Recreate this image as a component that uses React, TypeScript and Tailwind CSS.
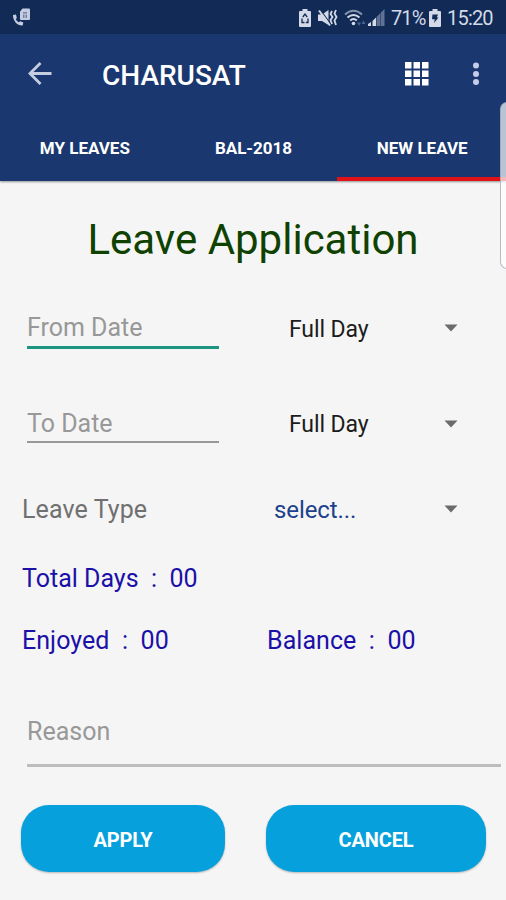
import React, { useState } from "react";

const tabs = ["MY LEAVES", "BAL-2018", "NEW LEAVE"];

const Caret = () => (
  <svg width="14" height="8" viewBox="0 0 14 8" className="absolute right-[48px]">
    <path d="M0.5 0.5h13L7 7.5z" fill="#6b6b6b" />
  </svg>
);

const BatteryIcon = ({ charging }: { charging?: boolean }) => (
  <svg width="12" height="18" viewBox="0 0 12 18">
    <path d="M3.5 0h5v2H11a1 1 0 0 1 1 1v14a1 1 0 0 1-1 1H1a1 1 0 0 1-1-1V3a1 1 0 0 1 1-1h2.500z" fill="#d3d9e6" />
    {charging ? (
      <path d="M3.500 5.500h5.500L7.800 8.500H9.500L5 14l.8-3.800H3z" fill="#122b56" />
    ) : (
      <g fill="none" stroke="#122b56" strokeWidth="1.300">
        <path d="M3.800 8 6 5l2.200 3" />
        <path d="M3 9.500v4h2.500M9 9.500v4H6.800" />
      </g>
    )}
  </svg>
);

const StatusBar = () => (
  <div className="flex h-[34px] items-center justify-between bg-[#122b56] pl-[12px] pr-[13px] text-[#d3d9e6]">
    <svg width="19" height="19" viewBox="0 0 19 19">
      <path d="M1 7l3-.5.8 3.500-1 1.200c.8 1.500 1.700 2.300 3 3l1.500-1 3 1.300-.6 3C5.500 18 .8 13 1 7z" fill="#c3cce0" />
      <path d="M10.500 .5H17q1 0 1 1v9.500q0 1-1 1H9q-1 0-1-1V3.500z" fill="#c3cce0" />
      <path d="M11 4h4v1.500h-4zM11 6.500h1.500V10H11zM13.500 6.500H15V10h-1.500z" fill="#7483a3" />
    </svg>
    <div className="flex items-center">
      <div className="mt-[2px] flex items-center">
        <span className="-ml-[3px] flex">
          <BatteryIcon />
        </span>
        <svg width="20" height="18" viewBox="0 0 20 18" className="ml-[7px]">
          <path d="M0 5.500h4L10.500 1v15L4 12H0z" fill="#d3d9e6" />
          <path d="M2.500 1 13.500 16" stroke="#122b56" strokeWidth="1.200" />
          <path d="M1 1.500 12 16.500" stroke="#d3d9e6" strokeWidth="2" />
          <path d="m14 2-1.500 3 2 3-2 3 1.500 4M18 1l-1.500 3.500 2 3.500-2 3.500 1.500 4.500" fill="none" stroke="#d3d9e6" strokeWidth="1.800" />
        </svg>
        <svg width="23" height="18" viewBox="0 0 23 18" className="ml-[6px]">
          <g fill="none" strokeWidth="2">
            <path d="M1 5.500Q9.500-2 18 5.500" stroke="#8592ad" />
            <path d="M3.500 8.500q6-5 12 0" stroke="#d3d9e6" />
            <path d="M6.200 11.500q3.300-3 6.600 0" stroke="#d3d9e6" />
          </g>
          <circle cx="9.500" cy="14.500" r="1.800" fill="#d3d9e6" />
          <path d="M13 13.500h4L15 17zM17.500 15h4l-2-3.500z" fill="#44648f" />
        </svg>
        <svg width="17" height="18" viewBox="0 0 17 18" className="ml-[1px]">
          <path d="M0 17v-2l3-2v4z" fill="#d3d9e6" />
          <path d="M4.500 17v-5L8 8.500V17z" fill="#d3d9e6" />
          <path d="M8.500 17V8L12 4.500V17zM12.500 17V4L16.500 0v17z" fill="#5f7295" />
        </svg>
      </div>
      <span className="ml-[6px] mt-[2px] w-[34px] whitespace-nowrap text-[20px] tracking-[-0.9px]">71%</span>
      <span className="ml-[4px] mr-px mt-[2px] flex">
        <BatteryIcon charging />
      </span>
      <span className="ml-[5px] mt-[2px] w-[46px] whitespace-nowrap text-[20px] tracking-[-0.8px]">15:20</span>
    </div>
  </div>
);

const App: React.FC = () => {
  const [active, setActive] = useState(2);

  return (
    <div className="relative h-[900px] w-[506px] overflow-hidden bg-[#f5f5f5] font-['Roboto',sans-serif]">
      <StatusBar />
      <header className="bg-[#1a386f] text-white shadow-[0_1px_2px_rgba(0,0,0,0.4)]">
        <div className="flex h-[80px] items-center pl-[28px] pr-[26px]">
          <svg width="24" height="24" viewBox="0 0 24 24" fill="none" stroke="#c5cde0" strokeWidth="2.800">
            <path d="M23.500 11.500H2M12.500 1 2 11.500 12.500 22" />
          </svg>
          <h1 className="ml-[50px] mt-[4px] text-[28px] font-medium leading-none">CHARUSAT</h1>
          <svg width="24" height="24" viewBox="0 0 24 24" className="ml-auto" fill="#fff">
            {[0, 8.500, 17].map((y) =>
              [0, 8.500, 17].map((x) => <rect key={`${x}-${y}`} x={x} y={y} width="6.500" height="6.500" />)
            )}
          </svg>
          <svg width="8" height="24" viewBox="0 0 8 24" className="ml-[43px]" fill="#c5cde8">
            <circle cx="4" cy="3.500" r="3" />
            <circle cx="4" cy="12" r="3" />
            <circle cx="4" cy="20" r="3" />
          </svg>
        </div>
        <nav className="grid h-[67px] grid-cols-3">
          {tabs.map((tab, index) => (
            <button
              key={tab}
              onClick={() => setActive(index)}
              className={`border-b-4 pl-px pt-[6px] text-[17px] font-bold ${index === active ? "border-[#e01218]" : "border-transparent"}`}
            >
              {tab}
            </button>
          ))}
        </nav>
      </header>

      <h2 className="h-[128px] text-center text-[42px] leading-[117px] text-[#0f4200]">
        Leave Application
      </h2>

      <div className="flex h-[40px] pl-[27px]">
        <div className="w-[192px] border-b-[3px] border-[#1c9480] text-[25px] leading-[38px] text-[#989898]">
          From Date
        </div>
        <div className="relative ml-[70px] flex h-[38px] flex-1 items-center text-[23px] tracking-[-0.1px] text-[#1c1c1c]">
          <span className="mt-[4px]">Full Day</span>
          <Caret />
        </div>
      </div>

      <div className="mt-[56px] flex h-[38px] pl-[27px]">
        <div className="w-[192px] border-b-2 border-[#989898] text-[25px] leading-[38px] text-[#989898]">
          To Date
        </div>
        <div className="relative ml-[70px] flex h-[38px] flex-1 items-center text-[23px] tracking-[-0.1px] text-[#1c1c1c]">
          <span className="mt-[3px]">Full Day</span>
          <Caret />
        </div>
      </div>

      <div className="mt-[48px] flex h-[36px] items-center pl-[22px] text-[25px] tracking-[0.1px]">
        <span className="mt-[2px] w-[252px] text-[#707070]">Leave Type</span>
        <div className="relative flex h-full flex-1 items-center text-[24px] tracking-[-0.1px] text-[#1c428c]">
          <span className="mt-px">select...</span>
          <Caret />
        </div>
      </div>

      <div className="mt-[34px] whitespace-pre pl-[22px] text-[25px] leading-[36px] text-[#1b10a8]">
        Total Days  :  00
      </div>
      <div className="mt-[26px] flex whitespace-pre pl-[22px] text-[25px] leading-[36px] tracking-[0.05px] text-[#1b10a8]">
        <span className="w-[245px]">Enjoyed  :  00</span>
        <span>Balance  :  00</span>
      </div>

      <div className="ml-[27px] mr-[5px] mt-[54px] h-[54px] border-b-[3px] border-[#bdbdbd] text-[25px] leading-[38px] text-[#989898]">
        Reason
      </div>

      <div className="mt-[38px] flex gap-[41px] pl-[21px] pr-[20px] text-[20px] font-bold tracking-[-0.15px] text-white">
        <button className="h-[67px] w-[204px] rounded-[28px] bg-[#06a1dc] pt-[2px] shadow-[0_1px_2px_rgba(0,0,0,0.25)]">
          APPLY
        </button>
        <button className="h-[67px] w-[220px] rounded-[28px] bg-[#06a1dc] pt-[2px] shadow-[0_1px_2px_rgba(0,0,0,0.25)]">
          CANCEL
        </button>
      </div>

      {/* edge panel handle */}
      <div className="absolute right-[-6px] top-[102px] h-[167px] w-[12px] rounded-l-[7px] border border-[#9a9fab]/70 bg-white/70" />
    </div>
  );
};

export default App;
